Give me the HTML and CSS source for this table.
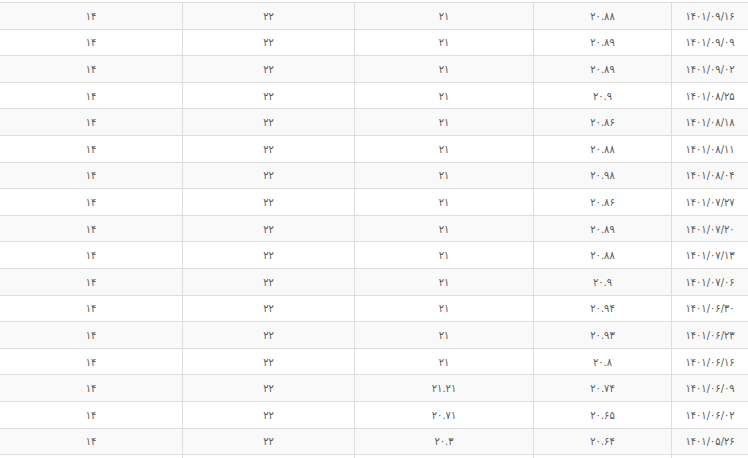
FILE: index.html
```html
<!DOCTYPE html>
<html lang="fa" dir="rtl">
<head>
<meta charset="utf-8">
<link rel="stylesheet" href="styles.css">
</head>
<body>
<div class="table">
  <div class="row"><div class="c">۱۴۰۱/۰۹/۱۶</div><div class="c">۲۰.۸۸</div><div class="c">۲۱</div><div class="c">۲۲</div><div class="c">۱۴</div></div>
  <div class="row"><div class="c">۱۴۰۱/۰۹/۰۹</div><div class="c">۲۰.۸۹</div><div class="c">۲۱</div><div class="c">۲۲</div><div class="c">۱۴</div></div>
  <div class="row"><div class="c">۱۴۰۱/۰۹/۰۲</div><div class="c">۲۰.۸۹</div><div class="c">۲۱</div><div class="c">۲۲</div><div class="c">۱۴</div></div>
  <div class="row"><div class="c">۱۴۰۱/۰۸/۲۵</div><div class="c">۲۰.۹</div><div class="c">۲۱</div><div class="c">۲۲</div><div class="c">۱۴</div></div>
  <div class="row"><div class="c">۱۴۰۱/۰۸/۱۸</div><div class="c">۲۰.۸۶</div><div class="c">۲۱</div><div class="c">۲۲</div><div class="c">۱۴</div></div>
  <div class="row"><div class="c">۱۴۰۱/۰۸/۱۱</div><div class="c">۲۰.۸۸</div><div class="c">۲۱</div><div class="c">۲۲</div><div class="c">۱۴</div></div>
  <div class="row"><div class="c">۱۴۰۱/۰۸/۰۴</div><div class="c">۲۰.۹۸</div><div class="c">۲۱</div><div class="c">۲۲</div><div class="c">۱۴</div></div>
  <div class="row"><div class="c">۱۴۰۱/۰۷/۲۷</div><div class="c">۲۰.۸۶</div><div class="c">۲۱</div><div class="c">۲۲</div><div class="c">۱۴</div></div>
  <div class="row"><div class="c">۱۴۰۱/۰۷/۲۰</div><div class="c">۲۰.۸۹</div><div class="c">۲۱</div><div class="c">۲۲</div><div class="c">۱۴</div></div>
  <div class="row"><div class="c">۱۴۰۱/۰۷/۱۳</div><div class="c">۲۰.۸۸</div><div class="c">۲۱</div><div class="c">۲۲</div><div class="c">۱۴</div></div>
  <div class="row"><div class="c">۱۴۰۱/۰۷/۰۶</div><div class="c">۲۰.۹</div><div class="c">۲۱</div><div class="c">۲۲</div><div class="c">۱۴</div></div>
  <div class="row"><div class="c">۱۴۰۱/۰۶/۳۰</div><div class="c">۲۰.۹۴</div><div class="c">۲۱</div><div class="c">۲۲</div><div class="c">۱۴</div></div>
  <div class="row"><div class="c">۱۴۰۱/۰۶/۲۳</div><div class="c">۲۰.۹۳</div><div class="c">۲۱</div><div class="c">۲۲</div><div class="c">۱۴</div></div>
  <div class="row"><div class="c">۱۴۰۱/۰۶/۱۶</div><div class="c">۲۰.۸</div><div class="c">۲۱</div><div class="c">۲۲</div><div class="c">۱۴</div></div>
  <div class="row"><div class="c">۱۴۰۱/۰۶/۰۹</div><div class="c">۲۰.۷۴</div><div class="c">۲۱.۲۱</div><div class="c">۲۲</div><div class="c">۱۴</div></div>
  <div class="row"><div class="c">۱۴۰۱/۰۶/۰۲</div><div class="c">۲۰.۶۵</div><div class="c">۲۰.۷۱</div><div class="c">۲۲</div><div class="c">۱۴</div></div>
  <div class="row"><div class="c">۱۴۰۱/۰۵/۲۶</div><div class="c">۲۰.۶۴</div><div class="c">۲۰.۳</div><div class="c">۲۲</div><div class="c">۱۴</div></div>
  <div class="row"><div class="c"></div><div class="c"></div><div class="c"></div><div class="c"></div><div class="c"></div></div>
</div>
</body>
</html>
```

FILE: styles.css
```css
html, body {
  margin: 0;
  padding: 0;
  background: #fff;
  overflow: hidden;
}
body {
  padding-top: 2px;
  font-family: "DejaVu Sans Condensed", "DejaVu Sans", sans-serif;
  font-size: 11px;
  color: #5a5a5a;
}
.table {
  border-top: 1px solid #ddd;
  width: 748px;
}
.row {
  display: grid;
  grid-template-columns: 77px 138px 179px 172px 182px;
  height: 26.6px;
  box-sizing: border-box;
  border-bottom: 1px solid #ddd;
}
.row:nth-child(odd) {
  background: #f9f9f9;
}
.c {
  display: flex;
  align-items: center;
  justify-content: center;
  padding-top: 1px;
  border-left: 1px solid #ddd;
  box-sizing: border-box;
}
.c:last-child {
  border-left: none;
}
```
